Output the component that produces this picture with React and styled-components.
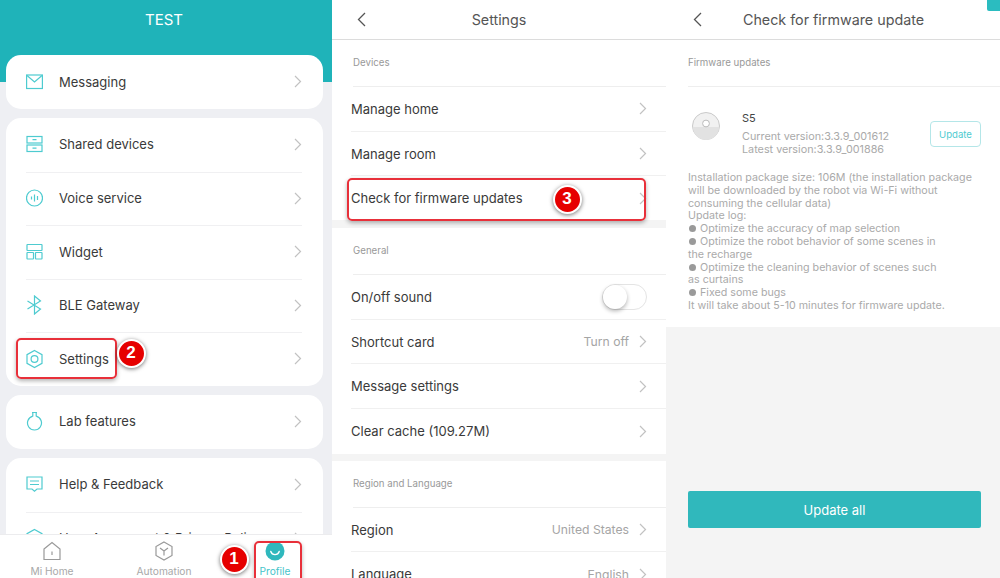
import React from 'react';
import styled, { createGlobalStyle } from 'styled-components';

const GlobalStyle = createGlobalStyle`
  html, body {
    margin: 0;
    padding: 0;
    background: #fff;
    font-family: Inter, "Liberation Sans", sans-serif;
  }
  * { box-sizing: border-box; }
`;

const Page = styled.div`
  position: relative;
  width: 1000px;
  height: 578px;
  overflow: hidden;
  display: grid;
  grid-template-columns: 332px 334px 334px;
  background: #fff;
`;

/* profile column */
const ProfilePanel = styled.section`
  position: relative;
  height: 578px;
  overflow: hidden;
  background: linear-gradient(#1fb3b9 0 82px, #eeeff3 82px);
`;

const ProfileTitle = styled.h1`
  margin: 0;
  height: 55px;
  padding: 10px 4px 0 0;
  text-align: center;
  color: #fff;
  font-size: 15px;
  line-height: 20px;
  font-weight: 400;
`;

const CardStack = styled.div`
  display: flex;
  flex-direction: column;
  gap: 9.5px;
  padding: 0 9px 0 6px;
`;

const Card = styled.div`
  background: #fff;
  border-radius: 15px;
  padding: 0 21px 0 20px;
`;

const MenuRow = styled.div`
  height: 53.5px;
  display: flex;
  align-items: center;
  gap: 16px;
  color: #3a3a3a;
  font-size: 13px;
  padding-bottom: ${p => (p.$flush ? 0 : 1)}px;
  border-top: ${p => (p.$first ? 'none' : '1px solid #f0f0f2')};
`;

const IconSlot = styled.span`
  width: 17px;
  height: 20px;
  flex: none;
  display: flex;
  align-items: center;
  justify-content: center;
  color: #4ecbd0;
`;

const MenuLabel = styled.span`
  flex: 1;
  white-space: nowrap;
`;

const TabBar = styled.nav`
  position: absolute;
  left: 0;
  right: 0;
  bottom: 0;
  height: 44px;
  background: #fff;
  border-top: 1px solid #ececee;
  display: grid;
  grid-template-columns: 104px 120px 102px;
`;

const Tab = styled.div`
  display: flex;
  flex-direction: column;
  align-items: center;
  padding-top: 6px;
  font-size: 10.2px;
  line-height: 14px;
  color: ${p => (p.$active ? '#45c4ca' : '#a8a8a8')};
`;

const TabIcon = styled.span`
  height: 23px;
  display: flex;
  align-items: flex-start;
`;

/* settings and firmware columns */
const Panel = styled.section`
  height: 578px;
  overflow: hidden;
  display: flex;
  flex-direction: column;
  background: ${p => p.$bg || '#fff'};
`;

const NavBar = styled.header`
  height: 40px;
  flex: none;
  display: flex;
  align-items: center;
  justify-content: center;
  position: relative;
  background: #fff;
  border-bottom: 1px solid #dcdcdc;
  color: #555;
  font-size: 14.3px;
`;

const BackButton = styled.span`
  position: absolute;
  left: ${p => p.$left}px;
  top: 12px;
  display: flex;
`;

const NavTitle = styled.span`
  padding-left: ${p => p.$shift || 0}px;
`;

const SectionLabel = styled.div`
  height: 47px;
  flex: none;
  margin-left: ${p => p.$left || 21}px;
  padding-top: 16px;
  font-size: 9.7px;
  line-height: 14px;
  color: #999;
  border-bottom: 1px solid #eeeeee;
`;

const SettingRow = styled.div`
  height: ${p => p.$h || 44.7}px;
  flex: none;
  margin-left: 19px;
  padding-right: 19px;
  display: flex;
  align-items: center;
  color: #3a3a3a;
  font-size: 13px;
  border-bottom: ${p => (p.$last ? 'none' : '1px solid #f0f0f0')};
`;

const RowValue = styled.span`
  margin-right: 10px;
  color: #a5a5a5;
  font-size: 12.2px;
`;

const Band = styled.div`
  height: ${p => p.$h}px;
  flex: none;
  background: #f4f4f4;
`;

const Toggle = styled.span`
  width: 45px;
  height: 26px;
  border: 1px solid #e4e4e4;
  border-radius: 13px;
  background: #fff;
  display: block;
  position: relative;
  &::after {
    content: '';
    position: absolute;
    left: 0;
    top: 0;
    width: 24px;
    height: 24px;
    border-radius: 50%;
    background: #fff;
    box-shadow: 0 2px 4px rgba(0, 0, 0, 0.3);
  }
`;

const FirmwareCard = styled.div`
  background: #fff;
  height: 287px;
  flex: none;
`;

const DeviceRow = styled.div`
  display: flex;
  align-items: flex-start;
  padding: 24px 19px 0 26px;
`;

const DeviceIcon = styled.span`
  width: 28px;
  height: 28px;
  margin-top: 1px;
  flex: none;
  display: flex;
`;

const DeviceInfo = styled.div`
  flex: 1;
  margin-left: 22px;
  font-size: 10.8px;
  line-height: 13px;
  color: #aaa;
`;

const DeviceName = styled.div`
  color: #444;
  font-size: 11px;
  line-height: 14px;
  margin-bottom: 5px;
`;

const UpdateChip = styled.span`
  width: 51px;
  height: 26px;
  margin-top: 10px;
  border: 1px solid #b4e6e8;
  border-radius: 4px;
  display: flex;
  align-items: center;
  justify-content: center;
  color: #4ecbd0;
  font-size: 9.6px;
`;

const Notes = styled.div`
  padding: 16px 19px 0 22px;
  font-size: 10.7px;
  line-height: 12.8px;
  color: #aaa;
`;

const Bullet = styled.span`
  display: inline-block;
  width: 7px;
  height: 7px;
  margin: 0 4px 0 1px;
  border-radius: 50%;
  background: #9a9a9a;
`;

const Footer = styled.div`
  flex: 1;
  display: flex;
  align-items: flex-end;
  padding: 0 19px 50px 22px;
`;

const UpdateAll = styled.div`
  width: 100%;
  height: 37px;
  background: #30b8bc;
  border-radius: 2px;
  display: flex;
  align-items: center;
  justify-content: center;
  color: #fff;
  font-size: 13px;
`;

const CornerMark = styled.span`
  position: absolute;
  right: 0;
  top: 0;
  width: 13px;
  height: 11px;
  background: #2bbcc0;
  border-bottom-left-radius: 2px;
`;

/* red tutorial marks painted over the screenshots */
const Highlight = styled.div`
  position: absolute;
  left: ${p => p.$x}px;
  top: ${p => p.$y}px;
  width: ${p => p.$w}px;
  height: ${p => p.$h}px;
  border: 2px solid #e8303a;
  border-radius: 5px;
  box-shadow: 0 2px 4px rgba(0, 0, 0, 0.3);
`;

const Badge = styled.div`
  position: absolute;
  left: ${p => p.$x - 14.5}px;
  top: ${p => p.$y - 14.5}px;
  width: 29px;
  height: 29px;
  border: 2.5px solid #fff;
  border-radius: 50%;
  background: #e60000;
  box-shadow: 0 1px 4px rgba(0, 0, 0, 0.55);
  color: #fff;
  font-family: "Liberation Sans", sans-serif;
  font-size: 17px;
  font-weight: 700;
  display: flex;
  align-items: center;
  justify-content: center;
`;

const Line = ({ w = 17, h = 20, children }) => (
  <svg width={w} height={h} viewBox={`0 0 ${w} ${h}`} fill="none" stroke="currentColor" strokeWidth="1.2">
    {children}
  </svg>
);

const Chevron = () => (
  <svg width="8" height="13" viewBox="0 0 8 13" fill="none" stroke="#c2c2c2" strokeWidth="1.2" style={{ flex: 'none' }}>
    <path d="M1 1l5.5 5.5L1 12" />
  </svg>
);

const BackArrow = () => (
  <svg width="10" height="15" viewBox="0 0 10 15" fill="none" stroke="#555" strokeWidth="1.3">
    <path d="M8 1L1.5 7.5 8 14" />
  </svg>
);

const icons = {
  mail: (
    <Line>
      <rect x="0.6" y="3" width="15.8" height="13.5" />
      <path d="M1 3.5l7.5 6.5L16 3.5" />
    </Line>
  ),
  shared: (
    <Line>
      <rect x="1" y="2.5" width="15" height="6.5" />
      <rect x="1" y="11" width="15" height="6.5" />
      <path d="M6.5 5.7h4M6.5 14.2h4" />
    </Line>
  ),
  voice: (
    <Line>
      <circle cx="8.5" cy="10" r="8" />
      <path d="M5.5 8.5v3M8.5 6.5v7M11.5 8v4" />
    </Line>
  ),
  widget: (
    <Line>
      <rect x="1" y="2.5" width="15" height="6" rx="0.5" />
      <rect x="1" y="10.5" width="6.5" height="6.5" rx="0.5" />
      <rect x="9.5" y="10.5" width="6.5" height="6.5" rx="0.5" />
    </Line>
  ),
  ble: (
    <Line>
      <path d="M1.5 6l13 8-6 5V1l6 5-13 8" />
    </Line>
  ),
  gear: (
    <Line>
      <path d="M8.5 1.5l7.5 4.2v8.6l-7.5 4.2L1 14.3V5.7z" />
      <circle cx="8.5" cy="10" r="3.4" />
    </Line>
  ),
  flask: (
    <Line>
      <path d="M6 1.5h5M6.8 1.5v4M10.2 1.5v4" />
      <path d="M6.8 5.2a7 7 0 1 0 3.4 0" />
    </Line>
  ),
  help: (
    <Line>
      <path d="M1 3h15v12h-5l-2.5 2.2L6 15H1z" />
      <path d="M4 7h9M4 10.5h9" />
    </Line>
  ),
  policy: (
    <Line>
      <path d="M8.5 1.5l7.5 4.2v8.6l-7.5 4.2L1 14.3V5.7z" />
    </Line>
  ),
};

const HomeIcon = () => (
  <svg width="18" height="20" viewBox="0 0 18 20" fill="none" stroke="#999" strokeWidth="1.2">
    <path d="M1 8l8-6.5L17 8v10.5H1z" />
    <path d="M9 10.5v3.5" />
  </svg>
);

const AutomationIcon = () => (
  <svg width="18" height="20" viewBox="0 0 18 20" fill="none" stroke="#999" strokeWidth="1.2">
    <path d="M9 1l8 4.5v9L9 19l-8-4.5v-9z" />
    <path d="M5 7l4 3 4-3M9 10v4.5" />
  </svg>
);

const ProfileIcon = () => (
  <svg width="20" height="20" viewBox="0 0 20 20">
    <circle cx="10" cy="10" r="9.5" fill="#2fb8bd" />
    <path d="M5.8 10.5a4.4 4.4 0 0 0 8.4 0" fill="none" stroke="#fff" strokeWidth="1.4" strokeLinecap="round" />
  </svg>
);

const RobotIcon = () => (
  <svg width="28" height="28" viewBox="0 0 28 28">
    <circle cx="14" cy="14" r="13.5" fill="#f1f1f1" stroke="#c9c9c9" />
    <path d="M1 15h26a13 13 0 0 1-26 0z" fill="#e2e2e2" />
    <circle cx="14" cy="11.5" r="3.4" fill="#fff" stroke="#bbb" />
  </svg>
);

const menuGroups = [
  [['mail', 'Messaging']],
  [
    ['shared', 'Shared devices'],
    ['voice', 'Voice service'],
    ['widget', 'Widget'],
    ['ble', 'BLE Gateway'],
    ['gear', 'Settings'],
  ],
  [['flask', 'Lab features']],
  [
    ['help', 'Help & Feedback'],
    ['policy', 'User Agreement & Privacy Policy'],
  ],
];

const releaseNotes = [
  ['Installation package size: 106M (the installation package'],
  ['will be downloaded by the robot via Wi-Fi without'],
  ['consuming the cellular data)'],
  ['Update log:'],
  ['Optimize the accuracy of map selection', true],
  ['Optimize the robot behavior of some scenes in', true],
  ['the recharge'],
  ['Optimize the cleaning behavior of scenes such', true],
  ['as curtains'],
  ['Fixed some bugs', true],
  ['It will take about 5-10 minutes for firmware update.'],
];

const App = () => {
  return (
    <Page>
      <GlobalStyle />

      <ProfilePanel>
        <ProfileTitle>TEST</ProfileTitle>
        <CardStack>
          {menuGroups.map((group, i) => (
            <Card key={i}>
              {group.map(([icon, label], j) => (
                <MenuRow key={label} $first={j === 0} $flush={i === 0}>
                  <IconSlot>{icons[icon]}</IconSlot>
                  <MenuLabel>{label}</MenuLabel>
                  <Chevron />
                </MenuRow>
              ))}
            </Card>
          ))}
        </CardStack>
        <TabBar>
          <Tab>
            <TabIcon><HomeIcon /></TabIcon>
            Mi Home
          </Tab>
          <Tab>
            <TabIcon><AutomationIcon /></TabIcon>
            Automation
          </Tab>
          <Tab $active>
            <TabIcon><ProfileIcon /></TabIcon>
            Profile
          </Tab>
        </TabBar>
      </ProfilePanel>

      <Panel>
        <NavBar>
          <BackButton $left={25}><BackArrow /></BackButton>
          <NavTitle>Settings</NavTitle>
        </NavBar>
        <SectionLabel>Devices</SectionLabel>
        <SettingRow><MenuLabel>Manage home</MenuLabel><Chevron /></SettingRow>
        <SettingRow><MenuLabel>Manage room</MenuLabel><Chevron /></SettingRow>
        <SettingRow $last $h={43.6}><MenuLabel>Check for firmware updates</MenuLabel><Chevron /></SettingRow>
        <Band $h={8} />
        <SectionLabel>General</SectionLabel>
        <SettingRow><MenuLabel>On/off sound</MenuLabel><Toggle /></SettingRow>
        <SettingRow><MenuLabel>Shortcut card</MenuLabel><RowValue>Turn off</RowValue><Chevron /></SettingRow>
        <SettingRow><MenuLabel>Message settings</MenuLabel><Chevron /></SettingRow>
        <SettingRow $last><MenuLabel>Clear cache (109.27M)</MenuLabel><Chevron /></SettingRow>
        <Band $h={7} />
        <SectionLabel>Region and Language</SectionLabel>
        <SettingRow><MenuLabel>Region</MenuLabel><RowValue>United States</RowValue><Chevron /></SettingRow>
        <SettingRow><MenuLabel>Language</MenuLabel><RowValue>English</RowValue><Chevron /></SettingRow>
      </Panel>

      <Panel $bg="#f4f4f4">
        <NavBar>
          <BackButton $left={27}><BackArrow /></BackButton>
          <NavTitle $shift={1}>Check for firmware update</NavTitle>
        </NavBar>
        <FirmwareCard>
          <SectionLabel $left={22}>Firmware updates</SectionLabel>
          <DeviceRow>
            <DeviceIcon><RobotIcon /></DeviceIcon>
            <DeviceInfo>
              <DeviceName>S5</DeviceName>
              <div>Current version:3.3.9_001612</div>
              <div>Latest version:3.3.9_001886</div>
            </DeviceInfo>
            <UpdateChip>Update</UpdateChip>
          </DeviceRow>
          <Notes>
            {releaseNotes.map(([line, bulleted]) => (
              <div key={line}>
                {bulleted && <Bullet />}
                {line}
              </div>
            ))}
          </Notes>
        </FirmwareCard>
        <Footer>
          <UpdateAll>Update all</UpdateAll>
        </Footer>
      </Panel>

      <CornerMark />
      <Highlight $x={16} $y={338} $w={101} $h={41} />
      <Badge $x={131} $y={353}>2</Badge>
      <Highlight $x={254} $y={541} $w={48} $h={42} />
      <Badge $x={234} $y={559}>1</Badge>
      <Highlight $x={347} $y={178} $w={299} $h={43} />
      <Badge $x={567} $y={199}>3</Badge>
    </Page>
  );
};

export default App;
